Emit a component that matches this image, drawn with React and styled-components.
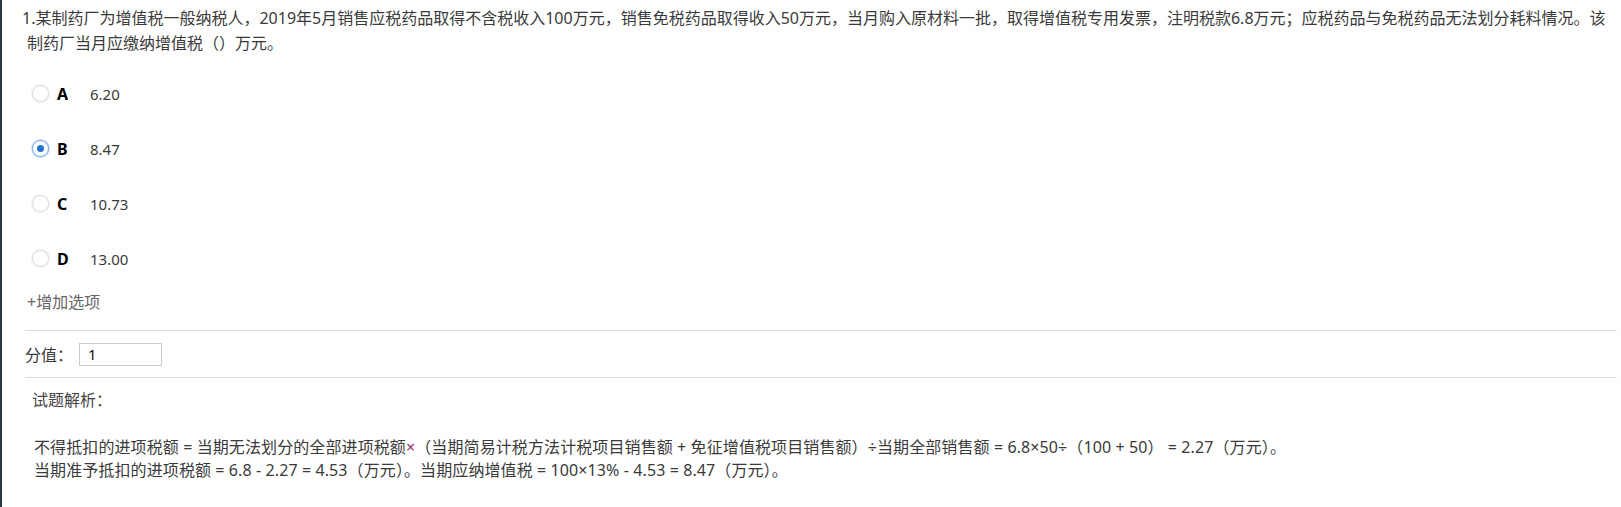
import React, { useState } from "react";
import styled, { createGlobalStyle } from "styled-components";

const GlobalStyle = createGlobalStyle`
body {
    margin: 0;
    background: #fff;
    font-family: "Noto Sans", "Noto Sans CJK SC", sans-serif;
    color: #333;
}
`;

const options = [
    { key: "A", value: "6.20" },
    { key: "B", value: "8.47" },
    { key: "C", value: "10.73" },
    { key: "D", value: "13.00" },
];

const App = () => {
    const [picked, setPicked] = useState("B");
    return (
        <Page>
            <GlobalStyle />
            <Question>
                <QLine>
                    1.某制药厂为增值税一般纳税人，2019年5月销售应税药品取得不含税收入100万元，销售免税药品取得收入50万元，当月购入原材料一批，取得增值税专用发票，注明税款6.8万元；应税药品与免税药品无法划分耗料情况。该
                </QLine>
                <QLine indent>制药厂当月应缴纳增值税（）万元。</QLine>
            </Question>

            <OptionList>
                {options.map((o) => (
                    <OptionRow key={o.key} onClick={() => setPicked(o.key)}>
                        <Radio checked={picked === o.key} />
                        <Letter>{o.key}</Letter>
                        <Value>{o.value}</Value>
                    </OptionRow>
                ))}
            </OptionList>

            <AddOption>+增加选项</AddOption>

            <Divider top="16px" />
            <ScoreRow>
                <Label>分值：</Label>
                <ScoreInput defaultValue="1" />
            </ScoreRow>
            <Divider />

            <Analysis>
                <AnalysisTitle>试题解析：</AnalysisTitle>
                <AnswerLine>
                    不得抵扣的进项税额 = 当期无法划分的全部进项税额<Times>×</Times>（当期简易计税方法计税项目销售额 + 免征增值税项目销售额）÷当期全部销售额 = 6.8×50÷（100 + 50） = 2.27（万元）。
                </AnswerLine>
                <AnswerLine>
                    当期准予抵扣的进项税额 = 6.8 - 2.27 = 4.53（万元）。当期应纳增值税 = 100×13% - 4.53 = 8.47（万元）。
                </AnswerLine>
            </Analysis>
        </Page>
    );
};

const Page = styled.div`
min-height: 507px;
box-sizing: border-box;
border-left: 2px solid #2b3a4a;
padding: 0 4px 0 0;
font-size: 16px;
`;

const Question = styled.div`
padding: 6px 0 0 20px;
line-height: 25px;
color: #3a3a3a;
`;

const QLine = styled.div`
white-space: nowrap;
padding-left: ${({ indent }) => (indent ? "5px" : "0")};
`;

const OptionList = styled.div`
margin-top: 10px;
padding-left: 30px;
`;

const OptionRow = styled.div`
height: 55px;
display: flex;
align-items: center;
cursor: pointer;
`;

const Radio = styled.span`
width: 17px;
height: 17px;
box-sizing: border-box;
border-radius: 50%;
border: 1px solid ${({ checked }) => (checked ? "#6ea6ea" : "#dcdcdc")};
background: #fff;
display: flex;
align-items: center;
justify-content: center;
box-shadow: ${({ checked }) => (checked ? "0 0 0 1px #cfe2fa" : "0 0 0 1px #f1f1f1")};

&::after {
    content: "";
    width: 7px;
    height: 7px;
    border-radius: 50%;
    background: #2474d8;
    display: ${({ checked }) => (checked ? "block" : "none")};
}
`;

const Letter = styled.span`
width: 33px;
margin-left: 8px;
font-weight: 700;
color: #000;
font-size: 16px;
`;

const Value = styled.span`
color: #3a3a3a;
font-size: 15px;
`;

const AddOption = styled.div`
margin-top: 4px;
padding-left: 25px;
line-height: 24px;
color: #666;
cursor: pointer;
`;

const Divider = styled.div`
height: 1px;
background: #dedede;
margin-left: 23px;
margin-top: ${({ top }) => top || "0"};
`;

const ScoreRow = styled.div`
height: 46px;
display: flex;
align-items: center;
padding-left: 23px;
`;

const Label = styled.span`
width: 54px;
color: #3a3a3a;
`;

const ScoreInput = styled.input`
width: 83px;
height: 23px;
box-sizing: border-box;
border: 1px solid #cccccc;
padding: 0 8px;
font-family: "Noto Sans", sans-serif;
font-size: 15px;
color: #111;
outline: none;
`;

const Analysis = styled.div`
padding: 10px 0 0 30px;
`;

const AnalysisTitle = styled.div`
line-height: 24px;
color: #444;
margin-bottom: 24px;
`;

const AnswerLine = styled.div`
line-height: 23px;
padding-left: 2px;
white-space: nowrap;
letter-spacing: 0.1px;
color: #3a3a3a;
`;

const Times = styled.span`
color: #9b2d7a;
`;

export default App;
